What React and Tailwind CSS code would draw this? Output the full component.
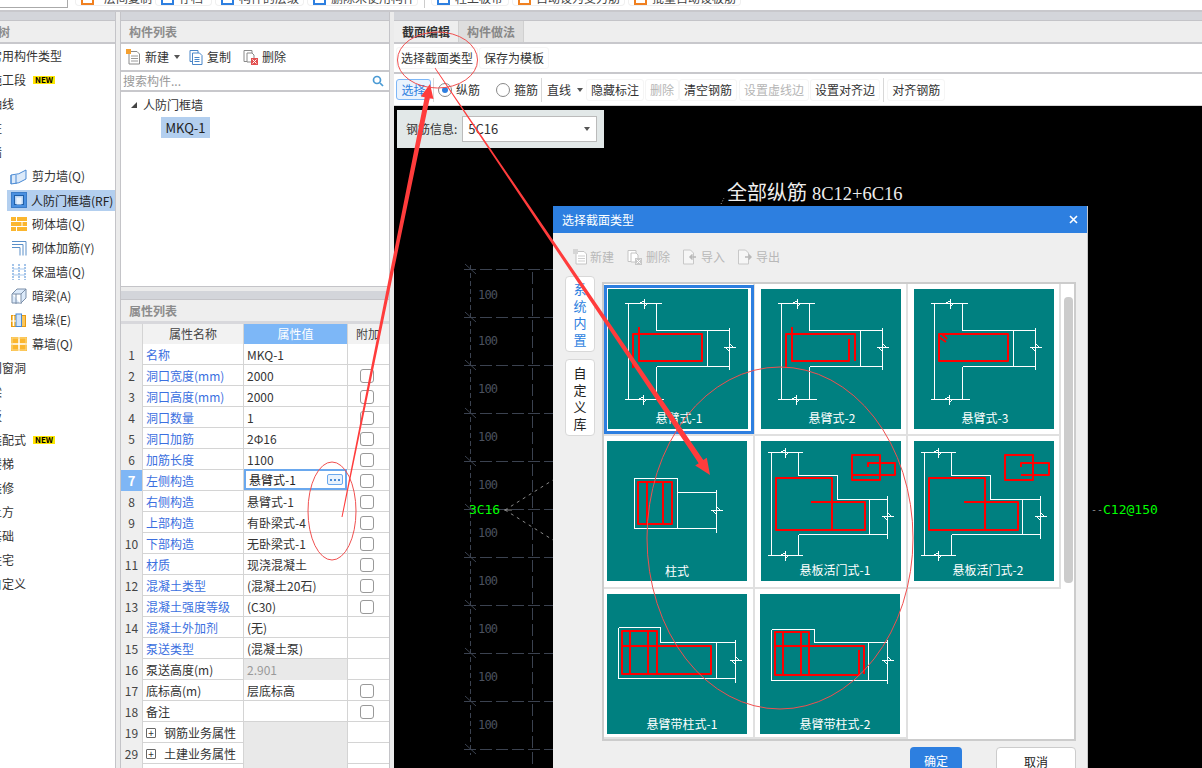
import React from "react";

const Divider = () => <div className="w-px h-[24px] bg-[#d8d8d8] shrink-0" />;
const Caret = ({ cls = "" }) => (
  <span className={`w-0 h-0 shrink-0 border-x-[3.500px] border-x-transparent border-t-[4px] border-t-[#555] ${cls}`} />
);

const IconNew = ({ muted }) => (
  <svg width="15" height="16" viewBox="0 0 15 16" className="shrink-0">
    <path d="M3 2.500h8l2.500 2.500v10H3z" fill="#fff" stroke={muted ? "#c4c4c4" : "#8a8a8a"} />
    <path d="M5 7h7M5 9.500h7M5 12h7" stroke={muted ? "#cfcfcf" : "#9a9a9a"} />
    <rect x="0" y="0" width="5" height="5" fill={muted ? "#d5d5d5" : "#f5a030"} />
  </svg>
);
const IconCopy = () => (
  <svg width="14" height="16" viewBox="0 0 14 16" className="shrink-0">
    <path d="M1 1.500h8v11H1z" fill="#fff" stroke="#4a86c8" />
    <path d="M3.500 4h7l2.500 2.500v9h-9.500z" fill="#fff" stroke="#4a86c8" />
    <path d="M5.500 8.500h5M5.500 10.500h5M5.500 12.500h5" stroke="#4a86c8" />
  </svg>
);
const IconDel = ({ muted }) => (
  <svg width="15" height="16" viewBox="0 0 15 16" className="shrink-0">
    <path d="M1 1.500h8v11H1z" fill="#fff" stroke={muted ? "#c4c4c4" : "#8a8a8a"} />
    <path d="M4 4h5l2 2v7H4z" fill="#fff" stroke={muted ? "#c4c4c4" : "#8a8a8a"} />
    <rect x="8" y="9" width="7" height="7" fill={muted ? "#c8c8c8" : "#e25050"} />
    <path d="M9.500 10.500l4 4M13.500 10.500l-4 4" stroke="#fff" />
  </svg>
);
const IconFileArrow = ({ flip }) => (
  <svg width="15" height="16" viewBox="0 0 15 16" className="shrink-0">
    <path d="M1.500 1h7l3 3v11h-10z" fill="#f6f6f6" stroke="#c8c8c8" />
    <path d={flip ? "M8 8h6M11.500 5.500L14 8l-2.500 2.500" : "M14 8H8M10.500 5.500L8 8l2.500 2.500"} fill="none" stroke="#b8b8b8" strokeWidth="1.500" />
  </svg>
);

const TreeIcons = {
  shear: (
    <svg width="17" height="17" viewBox="0 0 17 17">
      <path d="M1 7q8 0 15-5v9q-7 5-15 5z" fill="#dceafa" stroke="#4a8ad4" />
      <path d="M1 7v9M6 7v9" stroke="#4a8ad4" />
    </svg>
  ),
  door: (
    <svg width="16" height="16" viewBox="0 0 16 16">
      <rect x="0.500" y="0.500" width="15" height="15" fill="#4a90e0" stroke="#3a7cc8" />
      <rect x="3.500" y="3.500" width="9" height="9" fill="#b8d4f4" stroke="#1f5fa8" />
      <rect x="5.500" y="5.500" width="5" height="7" fill="#e8f2fc" />
    </svg>
  ),
  brick: (
    <svg width="16" height="14" viewBox="0 0 16 14">
      <rect x="0" y="0" width="16" height="14" fill="#fbb62e" />
      <path d="M0 4.500h16M0 9.500h16M5.500 0v4.500M11 4.500v5M5.500 9.500V14" stroke="#fff" />
    </svg>
  ),
  rebar: (
    <svg width="16" height="16" viewBox="0 0 16 16" fill="none" stroke="#5a8fc8">
      <path d="M1 1.500h14v14M1 4.500h11v11M1 7.500h8v8" />
    </svg>
  ),
  insul: (
    <svg width="14" height="16" viewBox="0 0 14 16" fill="none" stroke="#4a8ad4" strokeDasharray="2 1">
      <path d="M1 0v16M7 0v16M13 0v16" />
      <path d="M1 5h12M1 11h12" strokeDasharray="none" stroke="#a8c8ec" />
    </svg>
  ),
  beam: (
    <svg width="16" height="17" viewBox="0 0 16 17" fill="#fff" stroke="#7a8ea8">
      <path d="M1 6l5-5h9v9l-5 5H1z" fill="#dceafa" />
      <path d="M1 6h9v10M10 6l5-5" />
      <path d="M5 6v10" />
    </svg>
  ),
  pier: (
    <svg width="15" height="14" viewBox="0 0 15 14">
      <rect x="0.500" y="2.500" width="14" height="11" fill="#fbc65a" stroke="#e89a10" />
      <rect x="5" y="1" width="5.500" height="12.500" fill="#cfe2f8" stroke="#4a8ad4" />
      <path d="M0 8h5M2.500 2.500V13" stroke="#fff" />
    </svg>
  ),
  curtain: (
    <svg width="16" height="14" viewBox="0 0 16 14">
      <rect width="16" height="14" fill="#fbb62e" />
      <path d="M0 7h16M8 0v14" stroke="#fff" strokeWidth="1.500" />
      <rect x="1" y="1" width="14" height="12" fill="none" stroke="#fcd98a" />
    </svg>
  ),
};

const New = () => (
  <span className="ml-[7px] h-[8px] w-[22px] bg-[#ffe600] text-black text-[8px] leading-[8px] font-bold text-center inline-block">NEW</span>
);

const treeItems = [
  { t: "常用构件类型" },
  { t: "施工段", n: 1 },
  { t: "轴线" },
  { t: "柱" },
  { t: "墙" },
  { t: "剪力墙(Q)", i: "shear" },
  { t: "人防门框墙(RF)", i: "door", s: 1 },
  { t: "砌体墙(Q)", i: "brick" },
  { t: "砌体加筋(Y)", i: "rebar" },
  { t: "保温墙(Q)", i: "insul" },
  { t: "暗梁(A)", i: "beam" },
  { t: "墙垛(E)", i: "pier" },
  { t: "幕墙(Q)", i: "curtain" },
  { t: "门窗洞" },
  { t: "梁" },
  { t: "板" },
  { t: "装配式", n: 1 },
  { t: "楼梯" },
  { t: "装修" },
  { t: "土方" },
  { t: "基础" },
  { t: "住宅" },
  { t: "自定义" },
];

const TreeRow = ({ item }) => {
  if (item.i) {
    return (
      <div className="h-[24px] flex items-center pl-[10px]">
        <span className="w-[17px] flex justify-center shrink-0 relative z-10">{TreeIcons[item.i]}</span>
        {item.s ? (
          <span className="-ml-[20px] pl-[24px] flex-1 h-[21px] leading-[21px] bg-[#b3cfef] text-[#222] whitespace-nowrap">{item.t}</span>
        ) : (
          <span className="ml-[5px] text-[#333] whitespace-nowrap">{item.t}</span>
        )}
      </div>
    );
  }
  return (
    <div className="h-[24px] flex items-center -ml-[10px] text-[#333] whitespace-nowrap">
      {item.t}
      {item.n ? <New /> : null}
    </div>
  );
};

const props = [
  { n: "1", k: "名称", v: "MKQ-1", blue: 1 },
  { n: "2", k: "洞口宽度(mm)", v: "2000", blue: 1, c: 1 },
  { n: "3", k: "洞口高度(mm)", v: "2000", blue: 1, c: 1 },
  { n: "4", k: "洞口数量", v: "1", blue: 1, c: 1 },
  { n: "5", k: "洞口加筋", v: "2Φ16", blue: 1, c: 1 },
  { n: "6", k: "加筋长度", v: "1100", blue: 1, c: 1 },
  { n: "7", k: "左侧构造", v: "悬臂式-1", blue: 1, c: 1, sel: 1 },
  { n: "8", k: "右侧构造", v: "悬臂式-1", blue: 1, c: 1 },
  { n: "9", k: "上部构造", v: "有卧梁式-4", blue: 1, c: 1 },
  { n: "10", k: "下部构造", v: "无卧梁式-1", blue: 1, c: 1 },
  { n: "11", k: "材质", v: "现浇混凝土", blue: 1, c: 1 },
  { n: "12", k: "混凝土类型", v: "(混凝土20石)", blue: 1, c: 1 },
  { n: "13", k: "混凝土强度等级", v: "(C30)", blue: 1, c: 1 },
  { n: "14", k: "混凝土外加剂", v: "(无)", blue: 1 },
  { n: "15", k: "泵送类型", v: "(混凝土泵)", blue: 1 },
  { n: "16", k: "泵送高度(m)", v: "2.901", gray: 1 },
  { n: "17", k: "底标高(m)", v: "层底标高", c: 1 },
  { n: "18", k: "备注", v: "", c: 1 },
  { n: "19", k: "钢筋业务属性", v: "", gray: 1, plus: 1 },
  { n: "29", k: "土建业务属性", v: "", gray: 1, plus: 1 },
  { n: "", k: "", v: "", gray: 1 },
];

const PropRow = ({ p }) => (
  <div className="grid grid-cols-[22px_101px_104px_41px] h-[21px] border-b border-[#d4d4d4] leading-[21px]">
    <div className={p.sel ? "bg-[#7fb6f5] text-white font-bold text-[13px] text-center border-r border-[#d4d4d4]" : "bg-[#efefef] text-[#444] text-center border-r border-[#d4d4d4]"}>{p.n}</div>
    <div className={p.blue ? "pl-[3px] text-[#3b6fe0] border-r border-[#d4d4d4] whitespace-nowrap flex items-center" : "pl-[3px] text-[#333] border-r border-[#d4d4d4] whitespace-nowrap flex items-center"}>
      {p.plus ? (
        <span className="w-[10px] h-[10px] border border-[#666] rounded-[1px] mr-[8px] flex items-center justify-center text-[10px] leading-[8px] text-[#333]">+</span>
      ) : null}
      {p.k}
    </div>
    {p.sel ? (
      <div className="border-2 border-[#6aa8ee] -mt-px h-[21px] pl-[3px] flex items-center justify-between pr-[2px] text-[#222] mr-px">
        {p.v}
        <span className="w-[16px] h-[11px] rounded-[2px] border border-[#6aa8ee] bg-[#e8f2fd] flex items-center justify-center gap-[2px]">
          <span className="w-[2px] h-[2px] bg-[#4a8ad4]" />
          <span className="w-[2px] h-[2px] bg-[#4a8ad4]" />
          <span className="w-[2px] h-[2px] bg-[#4a8ad4]" />
        </span>
      </div>
    ) : (
      <div className={p.gray ? "pl-[3px] bg-[#e9e9e9] text-[#999] border-r border-[#d4d4d4]" : "pl-[3px] text-[#333] border-r border-[#d4d4d4]"}>{p.v}</div>
    )}
    <div className="flex items-center justify-center pr-[4px]">
      {p.c ? <span className="w-[14px] h-[14px] border border-[#999] rounded-[3px] bg-white" /> : null}
    </div>
  </div>
);

const hb = (x, y) => `M${x} ${y - 5}V${y + 5}M${x - 5} ${y}L${x} ${y - 3}M${x} ${y + 3}L${x + 3} ${y}`;
const vb = (x, y) => `M${x - 6} ${y}H${x + 6}M${x} ${y - 4}L${x + 4} ${y}M${x - 4} ${y}L${x} ${y + 4}`;

const tWhite = `M16 14H53M20 14V110M48 14V41H121M99 41V77M121 38V80M48 77H121M48 77V110M16 110H55${hb(36, 14)}${hb(35, 110)}${vb(121, 58)}`;
const flapWhite = `M6 11H41M10 11V114M37 11V34H76V58H126M108 58V93M126 54V97M37 93H126M37 93V114M6 114H41${hb(24, 11)}${hb(24, 114)}${vb(126, 75)}`;

const sections = [
  { label: "悬臂式-1", lx: 71, ly: 134, w: tWhite, r: "M25 79V45H94V72H31V38", pad: "pl-[4px]" },
  { label: "悬臂式-2", lx: 71, ly: 134, w: tWhite, r: "M25 79V45H94V72M31 38V72H88V50", pad: "pl-[6px]" },
  { label: "悬臂式-3", lx: 71, ly: 134, w: tWhite, r: "M25 45H94V72H25ZM25 48L32 53M28 45L33 50", pad: "pl-[6px]" },
  {
    label: "柱式", lx: 70, ly: 135, pad: "pl-[3px]",
    w: `M27 37H70V87H27ZM70 51H109M70 87H109M109 48V91${vb(109, 69)}`,
    r: "M31 41H65V83H31ZM40 41V83M56 41V83",
  },
  {
    label: "悬板活门式-1", lx: 74, ly: 134, w: flapWhite, pad: "pl-[6px]",
    r: "M15 37H71V89H15ZM50 61H104V89H71M71 61V89M91 14H119V39H91ZM107 26V22H134V34H91",
  },
  {
    label: "悬板活门式-2", lx: 74, ly: 134, w: flapWhite, pad: "pl-[6px]",
    r: "M15 37H71V89H15ZM50 61H104V89H71M71 61V89M91 14H119V39H91ZM107 26V22H135V34H107",
  },
  {
    label: "悬臂带柱式-1", lx: 75, ly: 135, pad: "pl-[3px]",
    w: `M11 33H53V48H128M109 48V84M128 45V88M11 84H128M11 33V84${vb(128, 66)}`,
    r: "M15 37H50V80H15ZM15 52H104V80H50M23 37V80M41 37V80",
  },
  {
    label: "悬臂带柱式-2", lx: 75, ly: 135, pad: "pl-[5px]",
    w: `M11 35H54V48H127M108 48V86M127 45V89M11 86H127M11 35V86${vb(127, 66)}`,
    r: "M15 38H49V81H15ZM15 52H104V80M49 81H99V56M23 38V81M41 38V81",
  },
];

const Section = ({ s }) => (
  <svg width="140" height="140" viewBox="0 0 140 140" className="block shrink-0 bg-[#008080]">
    <path d={s.w} fill="none" stroke="#fff" strokeWidth="1" shapeRendering="crispEdges" transform="translate(0.500 0.500)" />
    <path d={s.r} fill="none" stroke="#ff0000" strokeWidth="2" strokeLinejoin="round" />
    <text x={s.lx} y={s.ly} textAnchor="middle" fill="#fff" fontSize="12" fontFamily="'Noto Sans CJK SC',sans-serif">{s.label}</text>
  </svg>
);

const ys = [269, 317, 365, 413, 461, 509, 557, 605, 653, 701, 749];
const labels = [295, 341, 389, 437, 485, 533, 581, 629, 677, 725];

const TopBtn = ({ w, color, children }) => (
  <div className={`${w} h-[6px] rounded-b-[4px] border border-t-0 border-[#f0f0f0] flex items-end pl-[5px] gap-[5px] shrink-0 overflow-visible`}>
    <span className={`w-[13px] h-[8px] border-2 border-t-0 ${color} shrink-0`} />
    <span className="text-[#444] whitespace-nowrap leading-[16px] -mb-[1px]">{children}</span>
  </div>
);

const Tb = ({ gray, children, cls = "" }) => (
  <span className={`h-[22px] px-[4px] flex items-center rounded-[3px] border border-[#f5f5f5] whitespace-nowrap ${gray ? "text-[#b5b5b5]" : "text-[#333]"} ${cls}`}>{children}</span>
);

const Radio = ({ on }) => (
  <span className="w-[14px] h-[14px] rounded-full border border-[#888] bg-white flex items-center justify-center shrink-0">
    {on ? <span className="w-[6px] h-[6px] rounded-full bg-[#2d7fe0]" /> : null}
  </span>
);

const SideTab = ({ text, blue, h }) => (
  <div className={`${h} w-[30px] bg-white border border-[#d8d8d8] rounded-[4px] flex flex-col items-center justify-center text-[13px] leading-[17px] ${blue ? "text-[#2d7fe0]" : "text-[#222]"}`}>
    {text.split("").map((c) => <span key={c}>{c}</span>)}
  </div>
);

const PanelTitle = ({ children }) => (
  <div className="h-[21px] shrink-0 bg-[#eeeeee] text-[12px] font-bold text-[#8c8c8c] leading-[22px] pl-[8px]">{children}</div>
);

export default function App() {
  return (
    <div className="relative w-[1202px] h-[768px] overflow-hidden bg-[#ebebeb] flex flex-col text-[12px] [font-family:'Noto_Sans_CJK_SC','Liberation_Sans',sans-serif]">
      {/* top ribbon remainder */}
      <div className="h-[12px] shrink-0 bg-white border-b-2 border-[#c8c8cc] flex items-start overflow-hidden">
        <div className="w-[68px] h-[8px] border-r border-b border-[#aaa] shrink-0" />
        <div className="ml-[7px] flex gap-[3px] items-start">
          <TopBtn w="w-[77px]" color="border-[#f08020]"><span className="ml-[5px]">层间复制</span></TopBtn>
          <TopBtn w="w-[57px]" color="border-[#2d7fe0]">存档</TopBtn>
          <TopBtn w="w-[89px]" color="border-[#2d7fe0]">构件的层级</TopBtn>
          <TopBtn w="w-[111px]" color="border-[#2d7fe0]">删除未使用构件</TopBtn>
          <div className="w-px h-[8px] bg-[#ccc] mx-[3px]" />
          <TopBtn w="w-[78px]" color="border-[#2d7fe0]">柱上板带</TopBtn>
          <TopBtn w="w-[113px]" color="border-[#f08020]">自动设为受力筋</TopBtn>
          <TopBtn w="w-[113px]" color="border-[#f08020]">批量自动设板筋</TopBtn>
        </div>
      </div>

      <div className="flex-1 flex min-h-0">
        {/* tree panel */}
        <div className="w-[116px] shrink-0 flex flex-col border-r border-[#c4c4c8] overflow-hidden">
          <div className="h-[9px] shrink-0 bg-[#d3d5da] border-b border-[#c4c4c8]" />
          <div className="h-[21px] shrink-0 bg-[#eeeeee] text-[12px] font-bold text-[#8c8c8c] leading-[22px] whitespace-nowrap -ml-[26px]">导航树</div>
          <div className="h-[2px] shrink-0 bg-[#c8c8cc]" />
          <div className="flex-1 bg-white overflow-hidden">
            {treeItems.map((it) => <TreeRow key={it.t} item={it} />)}
          </div>
        </div>

        <div className="w-[4px] shrink-0 bg-[#ebebeb]" />

        {/* middle column */}
        <div className="w-[270px] shrink-0 flex flex-col border-l border-r border-[#c4c4c8]">
          <div className="h-[9px] shrink-0 bg-[#d3d5da] border-b border-[#c4c4c8]" />
          <PanelTitle>构件列表</PanelTitle>
          <div className="h-[2px] shrink-0 bg-[#c8c8cc]" />
          <div className="h-[26px] shrink-0 bg-white flex items-center pl-[5px]">
            <span className="flex items-center gap-[4px] text-[#333]"><IconNew />新建</span>
            <Caret cls="ml-[5px] mr-[9px]" />
            <span className="flex items-center gap-[4px] text-[#333] mr-[12px]"><IconCopy />复制</span>
            <span className="flex items-center gap-[4px] text-[#333]"><IconDel />删除</span>
          </div>
          <div className="h-[22px] shrink-0 bg-white border-y-2 border-[#c8c8cc] flex items-center justify-between pl-[2px] pr-[5px] text-[#999]">
            搜索构件...
            <svg width="12" height="12" viewBox="0 0 12 12" fill="none" stroke="#4a9ad4" strokeWidth="1.700">
              <circle cx="5" cy="5" r="3.500" />
              <path d="M8 8l3 3" />
            </svg>
          </div>
          <div className="h-[195px] shrink-0 bg-white border-b border-[#c4c4c8] pt-[1px]">
            <div className="h-[24px] flex items-center pl-[10px] text-[#333]">
              <span className="w-0 h-0 border-l-[6px] border-l-transparent border-b-[6px] border-b-[#444] mr-[7px]" />
              <span className="-ml-[1px]">人防门框墙</span>
            </div>
            <div className="ml-[40px] w-[49px] h-[21px] bg-[#b3cfef] text-[#222] leading-[21px] text-center text-[13px]">MKQ-1</div>
          </div>
          <div className="h-[4px] shrink-0 bg-[#ebebeb]" />
          <div className="h-[9px] shrink-0 bg-[#d3d5da] border-b border-[#c4c4c8]" />
          <PanelTitle>属性列表</PanelTitle>
          <div className="h-[3px] shrink-0 bg-[#d8d8dc]" />
          <div className="flex-1 bg-white min-h-0 overflow-hidden">
            <div className="grid grid-cols-[22px_101px_104px_41px] h-[20px] leading-[20px] text-center border-b border-[#d4d4d4]">
              <div className="bg-[#efefef] border-r border-[#d4d4d4]" />
              <div className="bg-[#f2f2f2] text-[#444] border-r border-[#d4d4d4]">属性名称</div>
              <div className="bg-[#7db7f7] text-white border-r border-[#d4d4d4]">属性值</div>
              <div className="bg-[#f2f2f2] text-[#444] text-left pl-[8px]">附加</div>
            </div>
            {props.map((p, i) => <PropRow key={i} p={p} />)}
          </div>
        </div>

        <div className="w-[4px] shrink-0 bg-[#ebebeb]" />

        {/* editor */}
        <div className="flex-1 min-w-0 flex flex-col">
          <div className="h-[9px] shrink-0 bg-[#d3d5da] border-b border-[#c4c4c8]" />
          <div className="h-[21px] shrink-0 bg-[#eeeeee] flex">
            <div className="w-[65px] border-r border-[#d0d0d0] text-center text-[12px] font-bold text-[#333] leading-[22px]">截面编辑</div>
            <div className="w-[65px] border-r border-[#d0d0d0] bg-[#dedede] text-center text-[12px] font-bold text-[#888] leading-[22px]">构件做法</div>
          </div>
          <div className="h-[2px] shrink-0 bg-[#c8c8cc]" />
          <div className="h-[28px] shrink-0 bg-white flex items-center pl-[2px] gap-[1px]">
            <Tb>选择截面类型</Tb>
            <Tb>保存为模板</Tb>
          </div>
          <div className="h-[2px] shrink-0 bg-[#c8c8cc]" />
          <div className="h-[32px] shrink-0 bg-white border-b border-[#d8d8d8] flex items-center pl-[2px]">
            <span className="w-[35px] h-[21px] rounded-[3px] border border-[#7db7f7] bg-[#eaf3fd] text-[#2d7fe0] text-center leading-[19px] shrink-0">选择</span>
            <span className="ml-[2px]"><Divider /></span>
            <span className="ml-[4px]"><Radio on /></span>
            <span className="ml-[4px] text-[#333]">纵筋</span>
            <span className="ml-[16px]"><Radio /></span>
            <span className="ml-[4px] text-[#333]">箍筋</span>
            <span className="ml-[3px]"><Divider /></span>
            <span className="ml-[5px] text-[#333]">直线</span>
            <Caret cls="ml-[6px] mr-[3px]" />
            <Tb>隐藏标注</Tb>
            <Tb gray cls="ml-[1px]">删除</Tb>
            <Tb>清空钢筋</Tb>
            <Tb gray cls="ml-[2px]">设置虚线边</Tb>
            <Tb cls="ml-[1px]">设置对齐边</Tb>
            <span className="ml-[3px]"><Divider /></span>
            <Tb cls="ml-[3px]">对齐钢筋</Tb>
          </div>
          <div className="flex-1 bg-black relative min-h-0" />
        </div>
      </div>

      {/* canvas drawing */}
      <svg className="absolute left-0 top-0 pointer-events-none" width="1202" height="768">
        <g stroke="#3b4250" fill="none">
          {ys.map((y) => (
            <path key={y} d={`M464 ${y + 0.5}H553`} strokeDasharray="12 4" />
          ))}
          {ys.map((y) => (
            <path key={"t" + y} d={`M465 ${y - 5}L476 ${y + 5}`} />
          ))}
          <path d="M470.500 265V755" strokeDasharray="5 3" />
          <path d="M532.500 272V768" strokeDasharray="12 4" />
        </g>
        {labels.map((y) => (
          <text key={y} x="478" y={y + 4} fill="#4a515e" fontSize="12" fontFamily="'DejaVu Sans Mono',monospace" textLength="20">100</text>
        ))}
        <path d="M505 510L553 480M505 510L553 540" stroke="#8a8a8a" strokeDasharray="3 4" fill="none" />
        <path d="M504 510H512" stroke="#8a8a8a" />
        <text x="469" y="514" fill="#00ff00" fontSize="13" fontFamily="'DejaVu Sans Mono',monospace" textLength="31">3C16</text>
        <path d="M721 204L724 198" stroke="#aaa" strokeDasharray="1 2" />
      </svg>
      <div className="absolute left-[727px] top-[178px] flex items-baseline text-[#eeeeee] whitespace-nowrap leading-[28px]">
        <span className="text-[20px] font-normal">全部纵筋</span>
        <span className="ml-[5px] text-[18.500px] [font-family:'Liberation_Serif',serif]">8C12+6C16</span>
      </div>
      <div className="absolute left-[1091px] top-[502px] text-[13px] leading-[16px] [font-family:'DejaVu_Sans_Mono',monospace] whitespace-nowrap text-[#00ff00] flex items-center">
        <span className="text-[#888] text-[10px]">--</span>C12@150
      </div>

      {/* rebar info */}
      <div className="absolute left-[397px] top-[110px] w-[207px] h-[38px] bg-[#e2e8e8] flex items-center pl-[9px]">
        <span className="text-[#333]">钢筋信息:</span>
        <div className="ml-[5px] w-[135px] h-[26px] bg-white border border-[#bbb] flex items-center justify-between pl-[5px] pr-[6px] text-[#333] text-[13px]">
          5C16
          <Caret />
        </div>
      </div>

      {/* dialog */}
      <div className="absolute left-[553px] top-[206px] w-[535px] h-[562px] bg-[#efefef] border-r border-[#c8c8c8] flex flex-col">
        <div className="h-[27px] shrink-0 bg-[#2d7fe0] text-white flex items-center justify-between pl-[9px] pr-[9px]">
          选择截面类型
          <svg width="9" height="9" viewBox="0 0 9 9" stroke="#fff" strokeWidth="1.600"><path d="M1 1l7 7M8 1l-7 7" /></svg>
        </div>
        <div className="h-[49px] shrink-0 flex items-center pl-[20px] pb-[1px] text-[#b8b8b8]">
          <span className="flex items-center gap-[2px] w-[54px]"><IconNew muted />新建</span>
          <span className="flex items-center gap-[4px] w-[55px]"><IconDel muted />删除</span>
          <span className="flex items-center gap-[4px] w-[55px]"><IconFileArrow />导入</span>
          <span className="flex items-center gap-[4px]"><IconFileArrow flip />导出</span>
        </div>
        <div className="flex pl-[12px]">
          <div className="w-[37px] shrink-0 -mt-[6px] flex flex-col gap-[7px]">
            <SideTab text="系统内置" blue h="h-[76px]" />
            <SideTab text="自定义库" h="h-[77px]" />
          </div>
          <div className="w-[474px] h-[459px] bg-white border-2 border-[#cccccc] flex relative">
            <div className="w-[457px] grid grid-cols-[151px_153px_153px] grid-rows-[152px_153px_150px] shrink-0">
              {sections.map((s, i) => (
                <div key={s.label} className={`relative border-r-2 border-b-2 border-[#e0e0e0] pt-[5px] ${s.pad}`}>
                  {i === 0 ? <div className="absolute left-0 top-[1px] w-[150px] h-[149px] border-[3px] border-[#2d7fe0] pointer-events-none" /> : null}
                  <Section s={s} />
                </div>
              ))}
              <div />
            </div>
            <div className="ml-[3px] mt-[13px] w-[9px] h-[286px] rounded-[4px] bg-[#cccccc]" />
          </div>
        </div>
        <div className="flex pl-[357px] mt-[6px]">
          <span className="w-[52px] h-[26px] rounded-t-[4px] bg-[#2d7fe0] text-white text-center leading-[28px]">确定</span>
          <span className="ml-[34px] w-[80px] h-[26px] rounded-t-[4px] bg-white border border-[#ccc] text-[#222] text-center leading-[28px]">取消</span>
        </div>
      </div>

      {/* red annotations */}
      <svg className="absolute left-0 top-0 pointer-events-none" width="1202" height="768">
        <polygon points="341.500,517 342.500,517 429.700,98.200 433.500,99 430,84 420.800,96.400 424.700,97.200" fill="#ff3c3c" />
        <polygon points="435.300,67.800 703.300,460.100 706.800,457.800 710,475 695.200,465.600 698.700,463.300 434.700,68.200" fill="#ff3c3c" />
        <ellipse cx="437.500" cy="60" rx="40" ry="28" fill="none" stroke="#f05050" />
        <ellipse cx="332" cy="511" rx="24" ry="49" fill="none" stroke="#f05050" />
        <ellipse cx="780" cy="538" rx="133" ry="171" fill="none" stroke="#f05050" />
      </svg>
    </div>
  );
}
